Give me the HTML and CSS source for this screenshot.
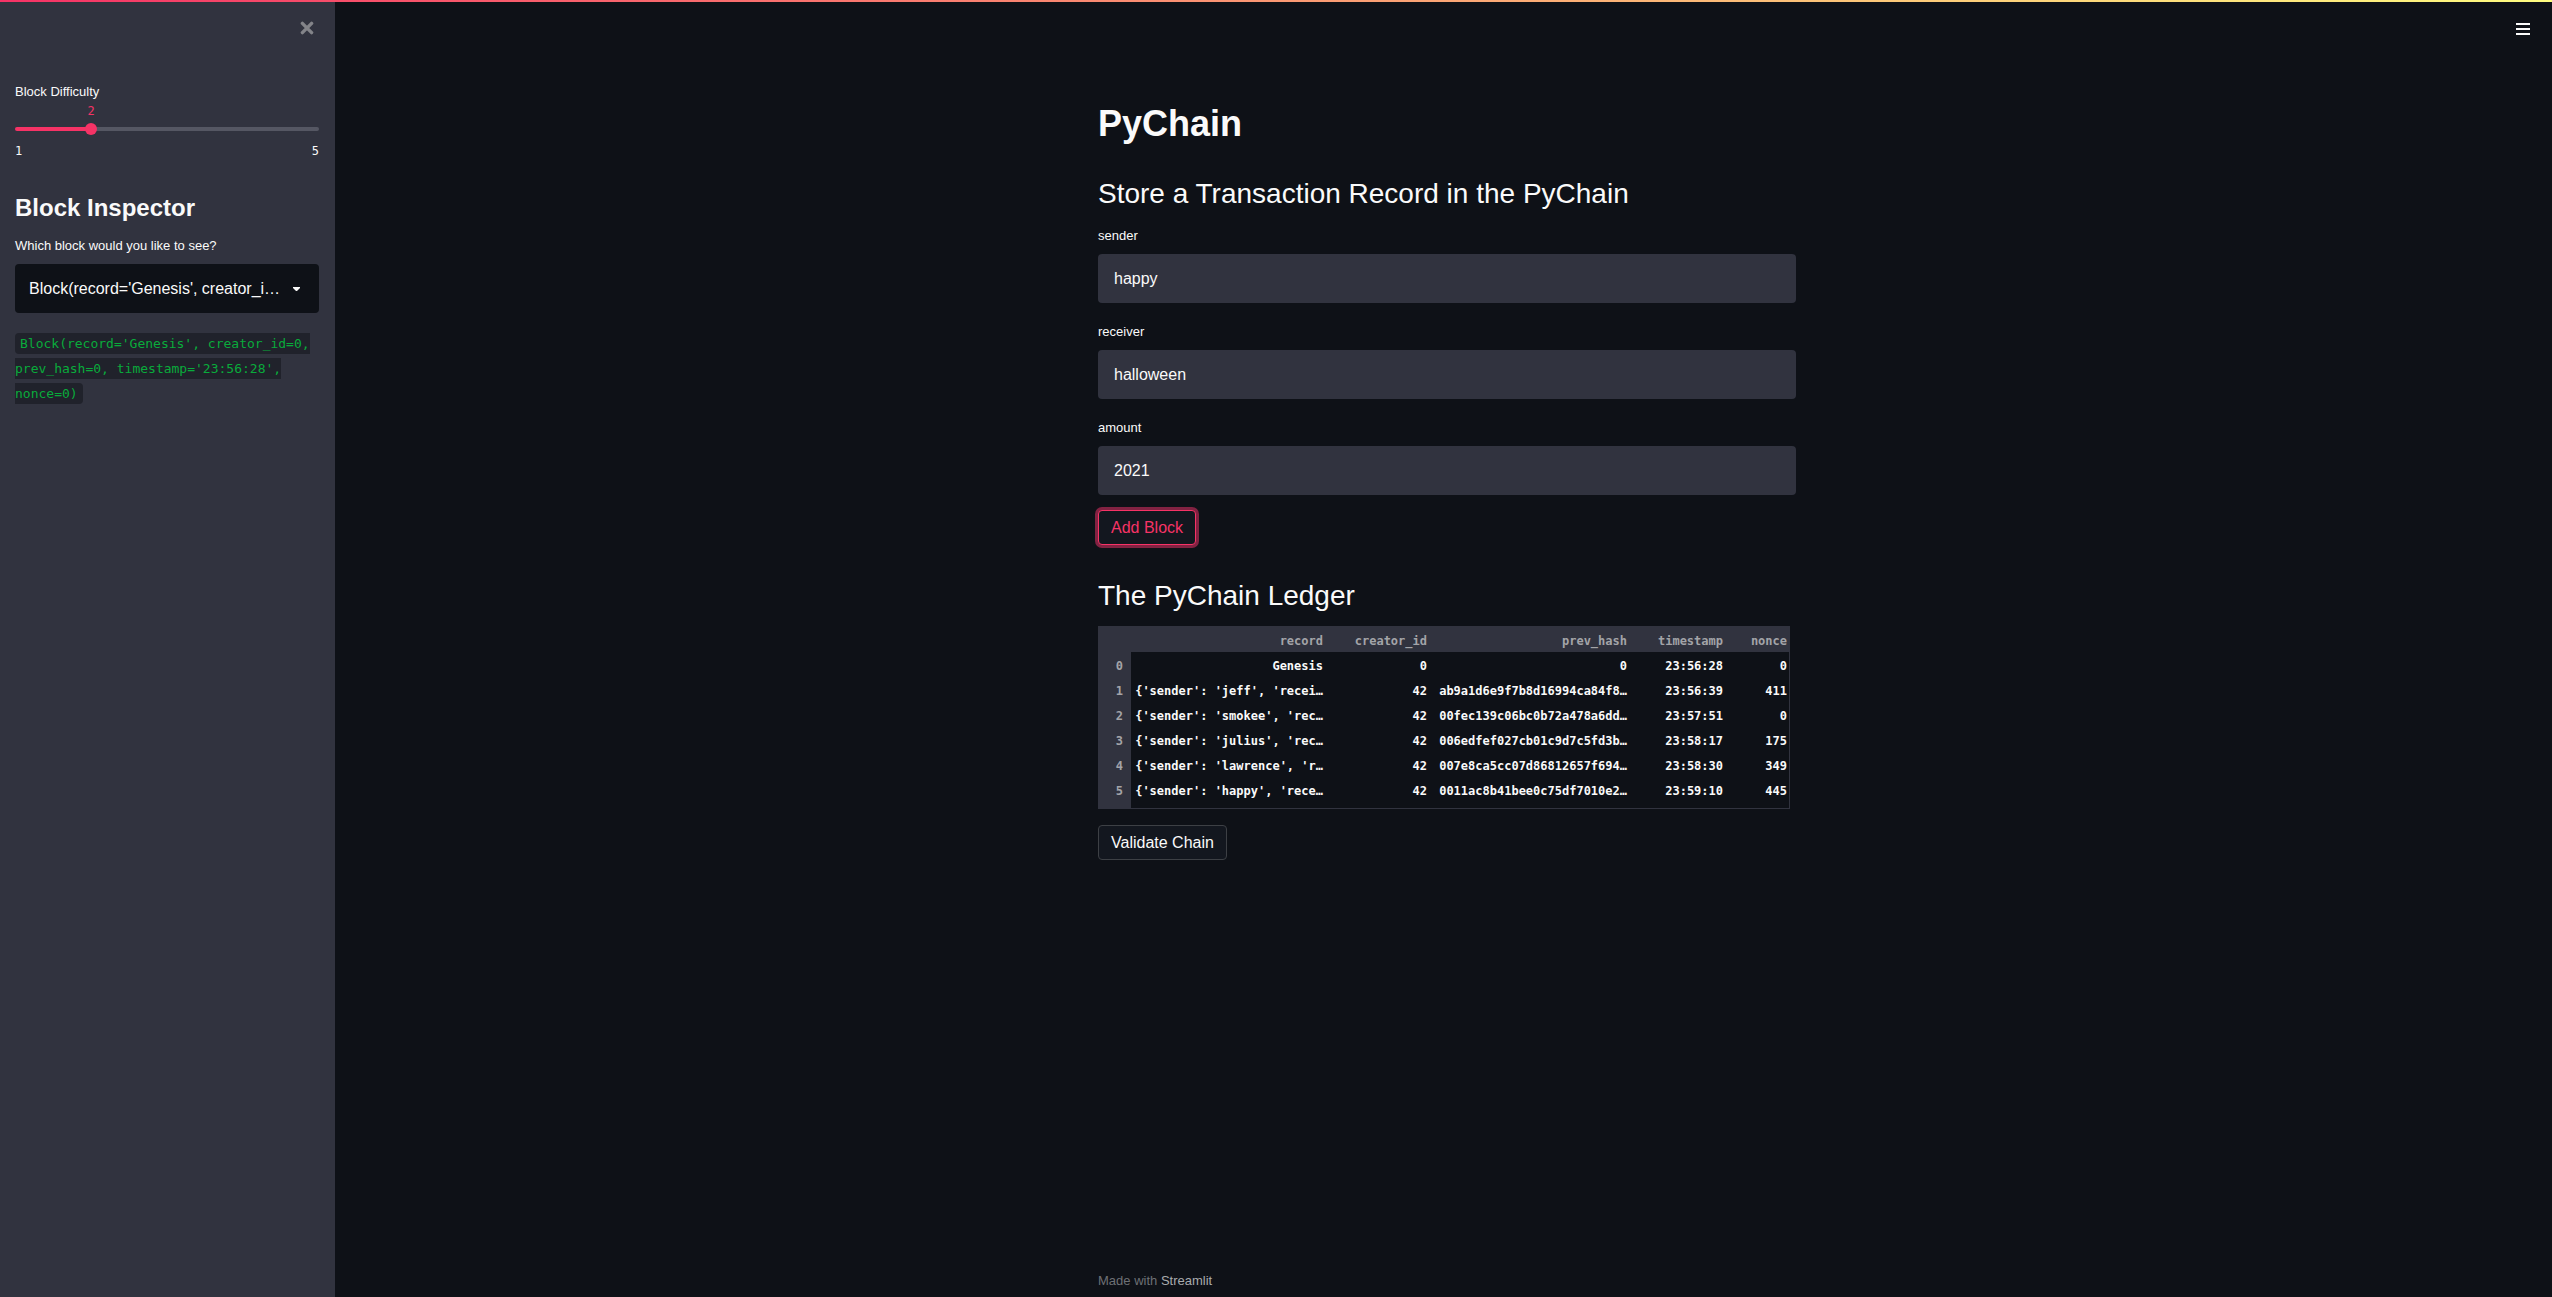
FILE: index.html
```html
<!DOCTYPE html>
<html lang="en">
<head>
<meta charset="utf-8">
<title>PyChain</title>
<meta name="viewport" content="width=device-width, initial-scale=1">
<link rel="stylesheet" href="styles.css">
</head>
<body>
<div class="decoration"></div>
<div class="app">
  <aside class="sidebar">
    <div class="sidebar-head">
      <button class="icon-button close" type="button" aria-label="Close sidebar">
        <svg width="14" height="14" viewBox="0 0 14 14"><path d="M2.4 2.4L11.6 11.6M11.6 2.4L2.4 11.6" stroke="currentColor" stroke-width="3.4" stroke-linecap="round" fill="none"/></svg>
      </button>
    </div>
    <div class="sidebar-body">
      <label class="label" for="difficulty">Block Difficulty</label>
      <div class="slider" style="--value: 25%">
        <output class="slider-value" for="difficulty">2</output>
        <div class="slider-track">
          <input id="difficulty" type="range" min="1" max="5" value="2">
        </div>
        <div class="slider-ends"><span>1</span><span>5</span></div>
      </div>
      <h2 class="sidebar-title">Block Inspector</h2>
      <label class="label" for="block">Which block would you like to see?</label>
      <div class="select">
        <select id="block">
          <option>Block(record='Genesis', creator_i…</option>
        </select>
        <svg class="select-arrow" width="7" height="4" viewBox="0 0 7 4"><path d="M0 0H7V1L4 4H3L0 1Z" fill="currentColor"/></svg>
      </div>
      <p class="inspected"><code>Block(record='Genesis', creator_id=0, prev_hash=0, timestamp='23:56:28', nonce=0)</code></p>
    </div>
  </aside>
  <main class="main">
    <header class="toolbar">
      <button class="icon-button menu" type="button" aria-label="Menu">
        <svg width="14" height="14" viewBox="0 0 14 14"><path d="M0 2H14M0 7H14M0 12H14" stroke="currentColor" stroke-width="2" fill="none"/></svg>
      </button>
    </header>
    <div class="content">
      <h1>PyChain</h1>
      <h2>Store a Transaction Record in the PyChain</h2>
      <div class="fields">
        <div class="field">
          <label class="label" for="sender">sender</label>
          <input id="sender" type="text" value="happy">
        </div>
        <div class="field">
          <label class="label" for="receiver">receiver</label>
          <input id="receiver" type="text" value="halloween">
        </div>
        <div class="field">
          <label class="label" for="amount">amount</label>
          <input id="amount" type="text" value="2021">
        </div>
      </div>
      <button class="button active" type="button">Add Block</button>
      <h2 class="ledger-title">The PyChain Ledger</h2>
      <table class="ledger">
        <colgroup><col class="c-index"><col class="c-wide"><col class="c-creator"><col class="c-wide"><col class="c-time"><col class="c-nonce"></colgroup>
        <thead>
          <tr><td></td><th scope="col">record</th><th scope="col">creator_id</th><th scope="col">prev_hash</th><th scope="col">timestamp</th><th scope="col">nonce</th></tr>
        </thead>
        <tbody>
          <tr><th scope="row">0</th><td>Genesis</td><td>0</td><td>0</td><td>23:56:28</td><td>0</td></tr>
          <tr><th scope="row">1</th><td>{'sender': 'jeff', 'recei…</td><td>42</td><td>ab9a1d6e9f7b8d16994ca84f8…</td><td>23:56:39</td><td>411</td></tr>
          <tr><th scope="row">2</th><td>{'sender': 'smokee', 'rec…</td><td>42</td><td>00fec139c06bc0b72a478a6dd…</td><td>23:57:51</td><td>0</td></tr>
          <tr><th scope="row">3</th><td>{'sender': 'julius', 'rec…</td><td>42</td><td>006edfef027cb01c9d7c5fd3b…</td><td>23:58:17</td><td>175</td></tr>
          <tr><th scope="row">4</th><td>{'sender': 'lawrence', 'r…</td><td>42</td><td>007e8ca5cc07d86812657f694…</td><td>23:58:30</td><td>349</td></tr>
          <tr><th scope="row">5</th><td>{'sender': 'happy', 'rece…</td><td>42</td><td>0011ac8b41bee0c75df7010e2…</td><td>23:59:10</td><td>445</td></tr>
        </tbody>
      </table>
      <button class="button" type="button">Validate Chain</button>
    </div>
    <footer class="footer">Made with <a href="#">Streamlit</a></footer>
  </main>
</div>
</body>
</html>
```
FILE: styles.css
```css
:root {
  --bg: #0e1117;
  --panel: #31333f;
  --text: #fafafa;
  --accent: #f63366;
  --sans: "Liberation Sans", Arial, sans-serif;
  --mono: "DejaVu Sans Mono", monospace;
}

* { box-sizing: border-box; }

body {
  margin: 0;
  background: var(--bg);
  color: var(--text);
  font: 16px/24px var(--sans);
}

h1, h2, p { margin: 0; }

input, select, button { font: inherit; color: inherit; }

.decoration {
  position: fixed;
  inset: 0 0 auto;
  height: 2px;
  background: linear-gradient(90deg, #f63366, #fffd80);
  z-index: 1;
}

.app {
  display: flex;
  min-height: 100vh;
}

/* Sidebar */

.sidebar {
  flex: 0 0 335px;
  padding: 16px;
  padding-left: 15px;
  background: var(--panel);
}

.sidebar-head {
  display: flex;
  justify-content: flex-end;
  height: 66px;
  padding: 4px 4px 0 0;
}

.icon-button {
  display: flex;
  align-items: center;
  justify-content: center;
  width: 16px;
  height: 16px;
  padding: 0;
  border: 0;
  background: none;
}

.close { color: #838489; }

.label {
  display: block;
  font-size: 13px;
  line-height: 20px;
}

.slider {
  position: relative;
  margin-bottom: 33px;
  padding-top: 25px;
  font: 12px/16px var(--mono);
}

.slider-value {
  position: absolute;
  top: 1px;
  left: var(--value);
  transform: translateX(-50%);
  color: var(--accent);
}

.slider-track {
  display: flex;
  align-items: center;
  height: 4px;
  border-radius: 2px;
  background: linear-gradient(90deg, var(--accent) var(--value), #555763 var(--value));
}

.slider-track input {
  flex: 1;
  min-width: 0;
  height: 12px;
  margin: 0 -6px;
  appearance: none;
  background: none;
}

.slider-track input::-webkit-slider-thumb {
  appearance: none;
  width: 12px;
  height: 12px;
  border-radius: 50%;
  background: var(--accent);
}

.slider-ends {
  display: flex;
  justify-content: space-between;
  margin-top: 12px;
}

.sidebar-title {
  margin-bottom: 12px;
  font-size: 24px;
  line-height: 32px;
}

.select {
  display: flex;
  align-items: center;
  margin: 8px 0 18px;
}

.select select {
  flex: 1;
  min-width: 0;
  height: 49px;
  padding: 0 24px 0 14px;
  border: 0;
  border-radius: 4px;
  appearance: none;
  background: var(--bg);
}

.select-arrow {
  margin: 0 19px 0 -26px;
  pointer-events: none;
}

.inspected {
  font: 13px/25px var(--mono);
}

code {
  padding: 3px 5px;
  border-radius: 4px;
  background: #20222b;
  color: #09ab3b;
  font: inherit;
}

/* Main column */

.main {
  flex: 1;
  display: flex;
  flex-direction: column;
  min-width: 0;
  padding-left: 7px;
}

.toolbar {
  display: flex;
  justify-content: flex-end;
  padding: 21px 21px 0;
}

.content, .footer {
  width: 100%;
  max-width: 698px;
  margin: 0 auto;
}

.content {
  flex: 1;
  padding-top: 59px;
}

h1 {
  margin-bottom: 24px;
  font-size: 36px;
  line-height: 56px;
}

.content h2 {
  font-size: 28px;
  font-weight: 400;
  line-height: 36px;
}

.fields {
  display: grid;
  gap: 19px;
  margin: 14px 0 15px;
}

.field input {
  display: block;
  width: 100%;
  height: 49px;
  margin-top: 8px;
  padding: 0 16px;
  border: 0;
  border-radius: 4px;
  background: var(--panel);
}

.button {
  display: block;
  height: 35px;
  padding: 0 12px;
  border: 1px solid #3d4045;
  border-radius: 4px;
  background: #13171f;
}

.button.active {
  border-color: var(--accent);
  box-shadow: 0 0 0 3px #822242;
  color: var(--accent);
}

.content .ledger-title {
  margin: 33px 0 12px;
}

/* Ledger table */

.ledger {
  width: 692px;
  max-width: 100%;
  margin-bottom: 16px;
  border: solid var(--panel);
  border-width: 0 1px 1px 0;
  border-spacing: 0;
  table-layout: fixed;
  font: bold 12px/22px var(--mono);
}

.c-index { width: 33px; }
.c-wide { width: 200px; }
.c-creator { width: 104px; }
.c-time { width: 96px; }
.c-nonce { width: 58px; }

.ledger th, .ledger td {
  height: 25px;
  padding: 3px 8px 0 0;
  text-align: right;
  white-space: nowrap;
}

.ledger tr > :last-child { padding-right: 2px; }

.ledger th, .ledger thead td {
  background: var(--panel);
  color: #a3a4a8;
  font-weight: inherit;
}

.ledger thead :is(th, td) { height: 26px; }

.ledger tbody tr:last-child > * {
  padding-bottom: 6px;
}

.footer {
  padding-bottom: 6px;
  color: #6d7075;
  font-size: 13px;
  line-height: 20px;
}

.footer a {
  color: #a9abae;
  text-decoration: none;
}
```
